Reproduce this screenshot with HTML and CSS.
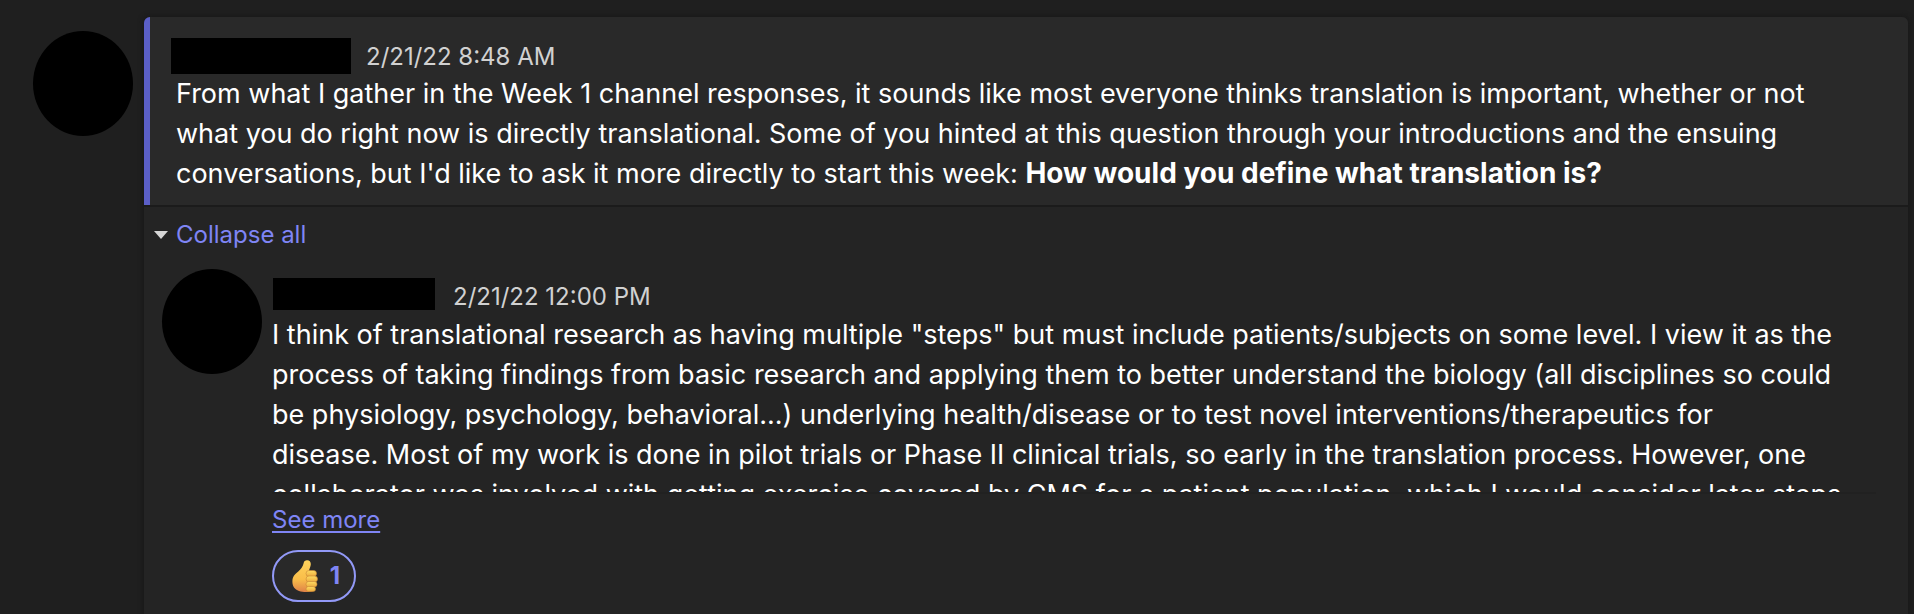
FILE: index.html
```html
<!DOCTYPE html>
<html lang="en">
<head>
<meta charset="utf-8">
<title>Week 2 discussion</title>
<link rel="stylesheet" href="styles.css">
</head>
<body>
<main class="thread">
  <div class="avatar"></div>
  <article class="card">
    <header class="post">
      <div class="meta">
        <span class="name name-author"></span>
        <time class="time" datetime="2022-02-21T08:48">2/21/22 8:48 AM</time>
      </div>
      <p class="text">From what I gather in the Week 1 channel responses, it sounds like most everyone thinks translation is important, whether or not what you do right now is directly translational. Some of you hinted at this question through your introductions and the ensuing conversations, but I'd like to ask it more directly to start this week: <strong>How would you define what translation is?</strong></p>
    </header>
    <section class="replies">
      <button class="collapse" type="button">
        <svg class="caret" viewBox="0 0 14 8" aria-hidden="true"><path d="M0 0H14L7 8Z"/></svg>
        Collapse all
      </button>
      <div class="reply">
        <div class="avatar"></div>
        <div class="reply-body">
          <div class="meta reply-meta">
            <span class="name name-reply"></span>
            <time class="time" datetime="2022-02-21T12:00">2/21/22 12:00 PM</time>
          </div>
          <div class="clip">
            <p class="text">I think of translational research as having multiple "steps" but must include patients/subjects on some level. I view it as the process of taking findings from basic research and applying them to better understand the biology (all disciplines so could be physiology, psychology, behavioral...) underlying health/disease or to test novel interventions/therapeutics for disease.&nbsp;Most of my work is done in pilot trials or Phase II clinical trials, so early in the translation process. However, one collaborator was involved with getting exercise covered by CMS for a patient population, which I would consider later steps</p>
          </div>
          <a class="more" href="#">See more</a>
          <button class="reaction" type="button" aria-label="Like, 1">
            <svg class="thumb" viewBox="0 0 26 32" aria-hidden="true">
              <defs>
                <linearGradient id="skin" x1="0" y1="0" x2="0" y2="1">
                  <stop offset="0" stop-color="#ffd35c"/>
                  <stop offset=".6" stop-color="#f9bd49"/>
                  <stop offset="1" stop-color="#df8248"/>
                </linearGradient>
                <linearGradient id="finger" x1="0" y1="0" x2="0" y2="1">
                  <stop offset="0" stop-color="#ffdc62"/>
                  <stop offset="1" stop-color="#ecaa3e"/>
                </linearGradient>
              </defs>
              <path fill="url(#skin)" d="M14 0.4C17.500 -0.500 19.400 2.200 18.600 5.600C18.200 7.500 17.300 9.200 17 11L21 13V31C18 32.200 11 32.300 7 31C2.500 29.500 0.300 26 0.400 21.500C0.500 16.500 2.600 14.500 6 11.800C9 9.400 10.900 6.300 11.700 3C12 1.500 12.700 0.700 14 0.400Z"/>
              <g fill="url(#finger)" stroke="#c98636" stroke-width=".6">
                <rect x="14" y="10.500" width="10.500" height="6" rx="3"/>
                <rect x="14" y="16" width="11.500" height="6" rx="3"/>
                <rect x="14" y="21.500" width="11" height="5.500" rx="2.700"/>
                <rect x="14" y="26.500" width="9.500" height="5" rx="2.500"/>
              </g>
            </svg>
            <span>1</span>
          </button>
        </div>
      </div>
    </section>
  </article>
</main>
</body>
</html>
```
FILE: styles.css
```css
* {
  box-sizing: border-box;
}

html {
  background: #1f1f1f;
}

body {
  margin: 0;
  color: #fff;
  font-family: Inter, "Liberation Sans", sans-serif;
  font-size: 27px;
  line-height: 40px;
}

button {
  margin: 0;
  padding: 0;
  border: 0;
  background: none;
  font: inherit;
  cursor: pointer;
}

.thread {
  display: flex;
  gap: 11px;
  min-height: 100vh;
  padding: 17px 6px 0 33px;
}

.avatar {
  flex: none;
  width: 100px;
  height: 105px;
  border-radius: 50%;
  background: #000;
}

.thread > .avatar {
  margin-top: 14px;
}

.card {
  flex: 1;
  min-width: 0;
  border-radius: 6px 6px 0 0;
  background: #242424;
  box-shadow: 0 0 4px 2px #1a1a1a;
  overflow: hidden;
}

.post {
  padding: 21px 48px 11px 26px;
  border-left: 6px solid #5b5fc7;
  background: #292929;
}

.meta {
  display: flex;
  align-items: center;
  gap: 15px;
  height: 36px;
}

.post .meta {
  margin-left: -5px;
}

.name {
  background: #000;
}

.name-author {
  width: 180px;
  height: 36px;
}

.name-reply {
  width: 162px;
  height: 32px;
}

.time {
  padding-top: 2px;
  color: #d1d1d1;
  font-size: 24px;
  line-height: 30px;
}

.text {
  margin: 0;
}

.text strong {
  font-size: 28px;
  line-height: 32px;
}

.replies {
  padding: 12px 32px 10px 10px;
  border-top: 2px solid #1b1b1b;
}

.collapse {
  display: flex;
  align-items: center;
  gap: 8px;
  height: 32px;
  color: #7f85f5;
  font-size: 24px;
}

.caret {
  width: 14px;
  height: 8px;
  fill: #d6d6d6;
}

.reply {
  display: flex;
  align-items: flex-start;
  gap: 10px;
  padding: 18px 0 0 8px;
}

.reply-body {
  flex: 1;
  min-width: 0;
}

.reply-meta {
  gap: 18px;
  height: 32px;
  margin: 9px 0 5px 1px;
}

.reply-meta .time {
  padding-top: 6px;
}

.clip {
  height: 179px;
  padding-right: 16px;
  border-bottom: 2px solid #212121;
  overflow: hidden;
}

.more {
  display: block;
  width: fit-content;
  margin-top: 10px;
  color: #7f85f5;
  font-size: 24px;
  line-height: 32px;
  text-decoration-thickness: 2px;
  text-underline-offset: 3px;
}

.reaction {
  display: flex;
  align-items: center;
  justify-content: center;
  gap: 12px;
  width: 84px;
  height: 52px;
  margin-top: 14px;
  padding-left: 4px;
  border: 2px solid #9299f7;
  border-radius: 26px;
  background: #292929;
  color: #7f85f5;
  font-size: 24px;
  font-weight: 700;
}

.thumb {
  width: 26px;
  height: 32px;
}
```
